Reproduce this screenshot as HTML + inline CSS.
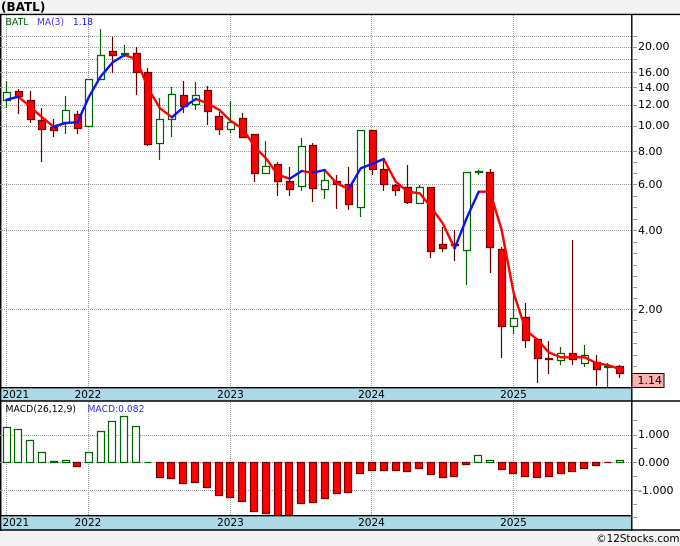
<!DOCTYPE html>
<html><head><meta charset="utf-8"><style>
html,body{margin:0;padding:0;background:#f3f3f3}
svg{display:block}
text{font-family:"DejaVu Sans",sans-serif;fill:#000}
</style></head><body>
<svg width="680" height="546" viewBox="0 0 680 546" xmlns="http://www.w3.org/2000/svg">
<rect width="680" height="546" fill="#f3f3f3"/>
<rect x="0" y="14" width="680" height="517" fill="#fff"/>
<path d="M0.7 14V531" stroke="#000" stroke-width="1.5"/>
<g stroke="#999" stroke-width="1" stroke-dasharray="1 1" fill="none">
<path d="M0 36.5H632M0 47.5H632M0 59.5H632M0 72.5H632M0 87.5H632M0 105.5H632M0 126.5H632M0 151.5H632M0 184.5H632M0 230.5H632M0 309.5H632"/>
<path d="M0 435.5H632M0 462.5H632M0 490.5H632"/>
<path d="M6.5 15V388M88.5 15V388M230.5 15V388M371.5 15V388M513.5 15V388"/>
<path d="M6.5 402V516M88.5 402V516M230.5 402V516M371.5 402V516M513.5 402V516"/>
</g>
<!-- wicks -->
<path fill="none" stroke="#006400" stroke-width="1.2" d="M6.5 81V108M65.5 96V134M89.5 79V127M100.5 29V80M124.5 45V57M159.5 98V160M171.5 87V137M195.5 82V110M230.5 101V133M265.5 141V173M301.5 138V191M324.5 171V199M360.5 130V217M419.5 185V204M466.5 172V285M478.5 170V175M513.5 293V334M560.5 347V365M584.5 345V367M607.5 363V387"/>
<path fill="none" stroke="#660000" stroke-width="1.2" d="M18.5 89V114M30.5 91V123M41.5 108V162M53.5 119V137M77.5 111V134M112.5 37V73M136.5 47V95M147.5 68V146M183.5 81V113M207.5 86V125M219.5 112V135M242.5 113V138M254.5 134V182M277.5 162V196M289.5 167V196M312.5 143V202M336.5 175V209M348.5 167V210M372.5 130V175M383.5 159V191M395.5 184V196M407.5 165V204M430.5 187V258M442.5 227V252M454.5 230V261M490.5 169V273M501.5 247V358M525.5 303V348M537.5 338V383M548.5 341V374M572.5 240V365M596.5 355V386M619.5 365V378"/>
<!-- green bodies -->
<path fill="#fff" stroke="#006400" stroke-width="1.2" d="M3.5 92.5h7v8h-7zM62.5 110.5h7v12h-7zM85.5 79.5h7v47h-7zM97.5 55.5h7v24h-7zM121.5 53.5h7v1h-7zM156.5 119.5h7v24h-7zM168.5 94.5h7v25h-7zM192.5 95.5h7v9h-7zM227.5 122.5h7v7h-7zM262.5 166.5h7v7h-7zM298.5 146.5h7v40h-7zM321.5 180.5h7v9h-7zM357.5 130.5h7v77h-7zM416.5 187.5h7v16h-7zM463.5 172.5h7v78h-7zM475.5 171.5h7v1h-7zM510.5 318.5h7v8h-7zM557.5 353.5h7v7h-7zM581.5 355.5h7v8h-7zM604.5 366.5h7v1h-7z"/>
<!-- red bodies -->
<path fill="#f00" stroke="#7a0000" stroke-width="1.2" d="M15.5 91.5h7v5h-7zM27.5 100.5h7v19h-7zM38.5 120.5h7v9h-7zM50.5 127.5h7v3h-7zM74.5 114.5h7v14h-7zM109.5 51.5h7v4h-7zM133.5 53.5h7v19h-7zM144.5 72.5h7v72h-7zM180.5 95.5h7v11h-7zM204.5 90.5h7v21h-7zM215.5 116.5h7v13h-7zM239.5 118.5h7v19h-7zM251.5 134.5h7v39h-7zM274.5 164.5h7v17h-7zM286.5 181.5h7v8h-7zM309.5 145.5h7v43h-7zM333.5 181.5h7v3h-7zM345.5 184.5h7v20h-7zM369.5 130.5h7v39h-7zM380.5 169.5h7v15h-7zM392.5 185.5h7v5h-7zM404.5 187.5h7v15h-7zM427.5 187.5h7v64h-7zM439.5 244.5h7v4h-7zM451.5 244.5h7v1h-7zM486.5 172.5h7v75h-7zM498.5 249.5h7v77h-7zM522.5 317.5h7v23h-7zM534.5 339.5h7v19h-7zM545.5 358.5h7v1h-7zM569.5 353.5h7v6h-7zM593.5 362.5h7v7h-7zM616.5 366.5h7v7h-7z"/>
<!-- MA line -->
<g fill="none" stroke-width="2.4" stroke-linejoin="round" stroke-linecap="round">
<path stroke="#f00" d="M18.5 96.7L30.5 107L41.5 116.7L53.5 126.7M124.5 55L136.5 59.3L148 88L160 108.3L172 117.3M196 99L207.5 103.3L219.5 110L230.5 120.7L243 129L254.7 146.7L265.7 158L277.7 174.7L289.7 178.7M301.7 171L312.7 172.7M324.7 170L336.7 183.3L348.7 189M383.7 159L395.7 181.7L407.7 191.7L419.7 193.3L430.7 206.7L442.7 223.3L454.7 248.3M478.7 191.7L490 191.7L501.7 230L513.7 293.3L525.7 330L537.7 340L548.7 352.3L560.7 357.3L572.7 357.3L584.7 357.3L596.7 363.3L607.7 365L619.7 369"/>
<path stroke="#1010ff" d="M6.5 99.7L18.5 96.7M53.5 126.7L65.5 123L77.5 122.3L89 96.7L100.5 76.7L112.7 62.3L124.5 55M172 117.3L184 106.7L196 99M289.7 178.7L301.7 171M312.7 172.7L324.7 170M348.7 189L360.7 168.3L372 164L383.7 159M454.7 248.3L466.7 218L478.7 191.7"/>
</g>
<!-- MACD bars -->
<path fill="#fff" stroke="#006400" stroke-width="1.2" d="M3.5 427.5h7v35h-7zM14.5 429.5h7v33h-7zM26.5 440.5h7v22h-7zM38.5 452.5h7v10h-7zM50.5 461.5h7v1h-7zM62.5 460.5h7v2h-7zM85.5 452.5h7v10h-7zM97.5 431.5h7v31h-7zM108.5 421.5h7v41h-7zM120.5 416.5h7v46h-7zM132.5 426.5h7v36h-7zM144.5 462.5h7M474.5 455.5h7v7h-7zM486.5 460.5h7v2h-7zM616.5 460.5h7v2h-7z"/>
<path fill="#f00" stroke="#7a0000" stroke-width="1.2" d="M73.5 462.5h7v4h-7zM156.5 462.5h7v15h-7zM167.5 462.5h7v16h-7zM179.5 462.5h7v21h-7zM191.5 462.5h7v20h-7zM203.5 462.5h7v25h-7zM215.5 462.5h7v33h-7zM226.5 462.5h7v35h-7zM238.5 462.5h7v39h-7zM250.5 462.5h7v49h-7zM262.5 462.5h7v51h-7zM274.5 462.5h7v53h-7zM285.5 462.5h7v53h-7zM297.5 462.5h7v41h-7zM309.5 462.5h7v40h-7zM321.5 462.5h7v36h-7zM333.5 462.5h7v31h-7zM344.5 462.5h7v30h-7zM356.5 462.5h7v11h-7zM368.5 462.5h7v8h-7zM380.5 462.5h7v8h-7zM392.5 462.5h7v8h-7zM403.5 462.5h7v9h-7zM415.5 462.5h7v6h-7zM427.5 462.5h7v12h-7zM439.5 462.5h7v15h-7zM450.5 462.5h7v14h-7zM462.5 462.5h7v2h-7zM498.5 462.5h7v7h-7zM509.5 462.5h7v11h-7zM521.5 462.5h7v14h-7zM533.5 462.5h7v15h-7zM545.5 462.5h7v14h-7zM557.5 462.5h7v11h-7zM568.5 462.5h7v9h-7zM580.5 462.5h7v6h-7zM592.5 462.5h7v3h-7zM604.5 462.5h7"/>
<!-- date bars -->
<rect x="2" y="388" width="630" height="13" fill="#add8e6"/>
<rect x="2" y="516" width="630" height="14" fill="#add8e6"/>
<path stroke="#000" stroke-width="1.4" fill="none" d="M0 387.7H632M0 401H680M0 515.7H632M0 530H680M0 14.4H680M631.8 14V531"/>
<!-- axis ticks -->
<path stroke="#999" fill="none" d="M632 36.5h5M632 47.5h5M632 59.5h5M632 72.5h5M632 87.5h5M632 105.5h5M632 126.5h5M632 151.5h5M632 162.5h5M632 173.5h5M632 184.5h5M632 196.5h5M632 207.5h5M632 219.5h5M632 230.5h5M632 242.5h5M632 253.5h5M632 265.5h5M632 276.5h5M632 287.5h5M632 298.5h5M632 309.5h5M632 320.5h5M632 332.5h5M632 343.5h5M632 355.5h5M632 366.5h5M632 420.5h5M632 435.5h5M632 448.5h5M632 462.5h5M632 476.5h5M632 490.5h5M632 504.5h5M632 517.5h5"/>
<!-- price tag -->
<rect x="632" y="373.5" width="32" height="14" fill="#ffb0b0" stroke="#000"/>
<text x="637.5" y="384" font-size="11">1.14</text>
<!-- text -->
<text x="1" y="11" font-size="12" font-weight="bold">(BATL)</text>
<text x="5.5" y="25" font-size="10" textLength="23" lengthAdjust="spacingAndGlyphs" style="fill:#006400">BATL</text>
<text x="37" y="25" font-size="10" textLength="27" lengthAdjust="spacingAndGlyphs" style="fill:#4a33ee">MA(3)</text>
<text x="73" y="25" font-size="10" textLength="20" lengthAdjust="spacingAndGlyphs" style="fill:#1010ff">1.18</text>
<text x="5.5" y="412" font-size="10" textLength="70.5" lengthAdjust="spacingAndGlyphs">MACD(26,12,9)</text>
<text x="87.5" y="412" font-size="10" textLength="57" lengthAdjust="spacingAndGlyphs" style="fill:#3322ee">MACD:0.082</text>
<g font-size="10.5">
<text x="2.5" y="398">2021</text>
<text x="88" y="398" text-anchor="middle">2022</text>
<text x="230.5" y="398" text-anchor="middle">2023</text>
<text x="371.5" y="398" text-anchor="middle">2024</text>
<text x="513.5" y="398" text-anchor="middle">2025</text>
<text x="2.5" y="526">2021</text>
<text x="88" y="526" text-anchor="middle">2022</text>
<text x="230.5" y="526" text-anchor="middle">2023</text>
<text x="371.5" y="526" text-anchor="middle">2024</text>
<text x="513.5" y="526" text-anchor="middle">2025</text>
</g>
<g font-size="11">
<text x="638" y="50">20.00</text>
<text x="638" y="76">16.00</text>
<text x="638" y="91">14.00</text>
<text x="638" y="108">12.00</text>
<text x="638" y="129">10.00</text>
<text x="638" y="155">8.00</text>
<text x="638" y="188">6.00</text>
<text x="638" y="234">4.00</text>
<text x="638" y="313">2.00</text>
<text x="638" y="438">1.000</text>
<text x="638" y="466">0.000</text>
<text x="638" y="494">-1.000</text>
</g>
<text x="679.5" y="542" font-size="10.4" text-anchor="end">©12Stocks.com</text>
</svg>
</body></html>
